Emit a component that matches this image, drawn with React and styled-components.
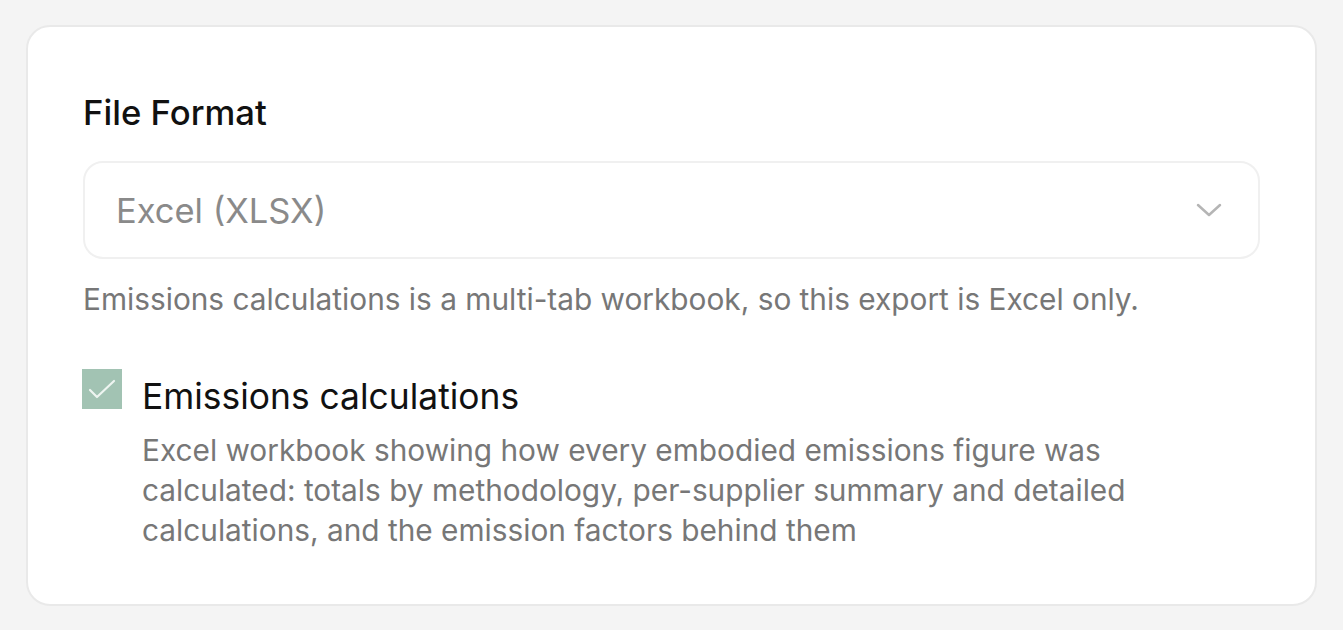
import styled, { createGlobalStyle } from "styled-components";

const GlobalStyle = createGlobalStyle`
  body {
    margin: 0;
    background: #f4f4f4;
    font-family: Inter, "Noto Sans", sans-serif;
  }
`;

const Page = styled.div`
  padding: 25px 26px;
`;

const Card = styled.div`
  background: #ffffff;
  border: 2px solid #e9e9e9;
  border-radius: 24px;
  padding: 62px 55px 54px;
`;

const Title = styled.h2`
  margin: 0 0 26px;
  font-size: 34.7px;
  font-weight: 500;
  line-height: 46px;
  color: #111;
`;

const Select = styled.div`
  display: flex;
  align-items: center;
  justify-content: space-between;
  height: 98px;
  box-sizing: border-box;
  border: 2px solid #f0f0f0;
  border-radius: 20px;
  padding: 0 36px 0 31px;
  font-size: 34.5px;
  color: #8a8a8a;
`;

const Hint = styled.p`
  margin: 20px 0 0;
  font-size: 29.8px;
  line-height: 40px;
  color: #777;
`;

const Option = styled.div`
  display: flex;
  gap: 20px;
  margin-top: 50px;
`;

const Box = styled.div`
  flex: none;
  width: 40px;
  height: 40px;
  margin-left: -1px;
  background: #a2c3b3;
  display: flex;
  align-items: center;
  justify-content: center;
`;

const OptionText = styled.div`
  display: flex;
  flex-direction: column;
`;

const OptionLabel = styled.div`
  font-size: 35.4px;
  line-height: 56px;
  color: #111;
`;

const OptionDesc = styled.div`
  margin-top: 5px;
  font-size: 29.8px;
  line-height: 40px;
  color: #777;
  max-width: 1000px;
`;

export default function App() {
  return (
    <Page>
      <GlobalStyle />
      <Card>
        <Title>File Format</Title>
        <Select>
          <span>Excel (XLSX)</span>
          <svg width="26" height="14" viewBox="0 0 26 14" fill="none">
            <path d="M2 2l11 10L24 2" stroke="#b5b5b5" strokeWidth="2.5" strokeLinecap="round" strokeLinejoin="round" />
          </svg>
        </Select>
        <Hint>Emissions calculations is a multi-tab workbook, so this export is Excel only.</Hint>
        <Option>
          <Box>
            <svg width="30" height="22" viewBox="0 0 30 22" fill="none">
              <path d="M3 12l7 7L27 3" stroke="#eef5f1" strokeWidth="2.2" strokeLinecap="round" strokeLinejoin="round" />
            </svg>
          </Box>
          <OptionText>
            <OptionLabel>Emissions calculations</OptionLabel>
            <OptionDesc>
              Excel workbook showing how every embodied emissions figure was calculated: totals by
              methodology, per-supplier summary and detailed calculations, and the emission factors
              behind them
            </OptionDesc>
          </OptionText>
        </Option>
      </Card>
    </Page>
  );
}
